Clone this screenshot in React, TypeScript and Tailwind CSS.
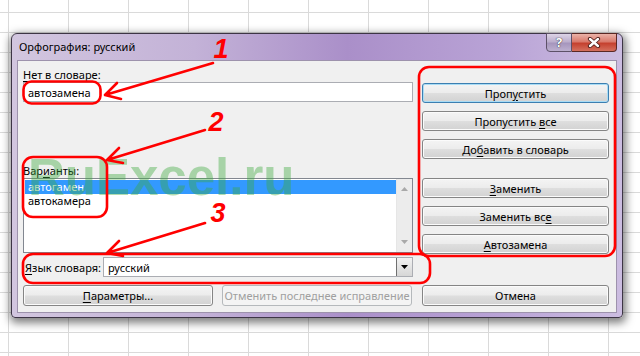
import type { ReactNode } from "react";
import clsx from "clsx";

const ui = "font-['Noto_Sans','Open_Sans',sans-serif]";

function U({ children }: { children: ReactNode }) {
  return <span className="underline decoration-1 underline-offset-[2px]">{children}</span>;
}

function Btn({
  children,
  className,
  primary,
  disabled,
}: {
  children: ReactNode;
  className?: string;
  primary?: boolean;
  disabled?: boolean;
}) {
  return (
    <div
      className={clsx(
        "flex items-center justify-center rounded-[3px] border text-[11px] leading-none",
        disabled
          ? "border-[#b5b9bc] bg-[#f4f4f4] text-[#a0a0a0]"
          : "bg-[linear-gradient(to_bottom,#f4f4f4_0%,#ececec_48%,#dedede_52%,#d2d2d2_100%)] text-black",
        !disabled && (primary ? "border-[#3c7fb1] shadow-[inset_0_0_0_1px_#a9dcf5]" : "border-[#858585] shadow-[inset_0_0_0_1px_#fbfbfb]"),
        className
      )}
    >
      <span>{children}</span>
    </div>
  );
}

export default function App() {
  return (
    <div
      className={clsx(
        "relative h-[356px] w-[640px] overflow-hidden bg-white pl-[11px] pt-[33px]",
        "bg-[linear-gradient(to_right,#dadada_1px,transparent_1px),linear-gradient(to_bottom,#dadada_1px,transparent_1px)] bg-size-[60px_20px] bg-position-[8px_12px]",
        ui
      )}
    >
      {/* dialog window */}
      <div className="flex h-[285px] w-[612px] flex-col rounded-t-[6px] rounded-b-[4px] border border-[#3d3545] bg-[linear-gradient(to_right,#d2c6df_0%,#c3b2d7_30%,#aa8fc9_55%,#b9a3d6_80%,#ccbde1_100%)] px-[5px] pb-[4px] shadow-[1px_3px_9px_2px_rgba(0,0,0,0.5)]">
        {/* title bar */}
        <div className="flex h-[26px] shrink-0 items-start justify-between">
          <span className="mt-[6px] pl-[2px] text-[11px] leading-[14px] text-black">Орфография: русский</span>
          <div className="-mt-px flex h-[19px]">
            <div className="flex w-[26px] items-center justify-center rounded-bl-[4px] border border-[#5d5168] bg-[linear-gradient(to_bottom,#ddd4e6_0%,#bcaecd_45%,#a696bd_55%,#bdb0d0_100%)] pb-px text-[13px] font-bold leading-none text-white [text-shadow:0_0_1px_#333,0_0_1px_#333]">
              ?
            </div>
            <div className="flex w-[45px] items-center justify-center rounded-br-[4px] border border-l-0 border-[#5a2824] bg-[linear-gradient(to_bottom,#eab2a8_0%,#d97a6c_45%,#c5412f_55%,#d4705e_100%)]">
              <svg width="14" height="11" viewBox="0 0 14 11">
                <path d="M3 2 L11 9 M11 2 L3 9" stroke="#4d1d19" strokeWidth="4.2" strokeLinecap="round" />
                <path d="M3 2 L11 9 M11 2 L3 9" stroke="#fff" strokeWidth="2.4" strokeLinecap="round" />
              </svg>
            </div>
          </div>
        </div>

        {/* client area */}
        <div className="flex h-[253px] w-[600px] flex-col border border-[#9d92ac] bg-[#f0f0f0] pl-[5px] pr-[7px] text-[11px] text-black">
          <div className="flex h-[216px] gap-[9px]">
            {/* left column */}
            <div className="flex w-[390px] flex-col">
              <div className="mt-[6px] leading-[15px]">
                <U>Н</U>ет в словаре:
              </div>
              <div className="flex h-[20px] items-center border border-[#abadb3] bg-white pl-[4px] leading-none">
                автозамена
              </div>

              <div className="mt-[61px] leading-[15px]">
                Вар<U>и</U>анты:
              </div>
              <div className="flex h-[75px] border border-[#828790] bg-white">
                <div className="flex flex-1 flex-col pl-px pt-px">
                  <div className="h-[14px] bg-[#3399ff] pl-[3px] leading-[14px] text-white">автогамен</div>
                  <div className="h-[14px] pl-[3px] leading-[14px]">автокамера</div>
                </div>
                <div className="flex w-[16px] flex-col items-center justify-between border-l border-[#e6e6e6] bg-[#ececec] py-[8px]">
                  <svg width="7" height="4" viewBox="0 0 7 4">
                    <path d="M0 4 L3.5 0 L7 4 Z" fill="#a9a9a9" />
                  </svg>
                  <svg width="7" height="4" viewBox="0 0 7 4">
                    <path d="M0 0 L7 0 L3.5 4 Z" fill="#a9a9a9" />
                  </svg>
                </div>
              </div>

              <div className="mt-[4px] flex h-[20px] items-center">
                <div className="w-[80px] pl-[2px] leading-none">
                  <U>Я</U>зык словаря:
                </div>
                <div className="flex h-[20px] flex-1 items-center justify-between border border-[#abadb3] bg-white pl-[4px] leading-none">
                  <span>русский</span>
                  <div className="flex h-full w-[16px] items-center justify-center border-l border-[#707070] bg-[linear-gradient(to_bottom,#f2f2f2,#d6d6d6)]">
                    <svg width="7" height="4" viewBox="0 0 7 4">
                      <path d="M0 0 L7 0 L3.5 4 Z" fill="#000" />
                    </svg>
                  </div>
                </div>
              </div>
            </div>

            {/* right column */}
            <div className="flex w-[187px] flex-col">
              <Btn primary className="mt-[22px] h-[20px]">
                Проп<U>у</U>стить
              </Btn>
              <Btn className="mt-[8px] h-[20px]">
                Пропустить <U>в</U>се
              </Btn>
              <Btn className="mt-[8px] h-[20px]">
                До<U>б</U>авить в словарь
              </Btn>
              <Btn className="mt-[19px] h-[20px]">
                <U>З</U>аменить
              </Btn>
              <Btn className="mt-[8px] h-[20px]">
                Заменить вс<U>е</U>
              </Btn>
              <Btn className="mt-[8px] h-[20px]">
                <U>А</U>втозамена
              </Btn>
            </div>
          </div>

          {/* bottom buttons */}
          <div className="mt-[8px] flex h-[21px]">
            <Btn className="w-[190px]">
              <U>П</U>араметры...
            </Btn>
            <Btn disabled className="ml-[9px] w-[190px]">
              Отменить последнее исправление
            </Btn>
            <Btn className="ml-[10px] w-[187px]">Отмена</Btn>
          </div>
        </div>
      </div>

      {/* site watermark */}
      <div className="pointer-events-none absolute left-[28px] top-[152px] font-['Liberation_Sans',Arial,sans-serif] text-[51px] font-bold leading-none text-[#3caa3c] opacity-40">
        RuExcel.ru
      </div>

      {/* red annotations */}
      <svg className="pointer-events-none absolute left-0 top-0" width="640" height="356" viewBox="0 0 640 356">
        <g fill="none" stroke="#ff0000" strokeWidth="2.6" strokeLinecap="round" strokeLinejoin="round">
          <rect x="23.5" y="81.5" width="77" height="22" rx="8" />
          <rect x="23" y="157" width="84" height="60" rx="10" />
          <rect x="23" y="254" width="407" height="29" rx="10" />
          <rect x="419" y="67" width="196" height="189" rx="10" />
          <path d="M213 63 L105 95 M117 83 L105 95 L121 99" />
          <path d="M205 130 L107 160 M119 148 L107 160 L123 163" />
          <path d="M205 223 L107 253 M119 241 L107 253 L123 256" />
        </g>
        <g fill="#ff0000" fontFamily="'Liberation Sans', Arial, sans-serif" fontWeight="bold" fontStyle="italic" fontSize="27" textAnchor="middle">
          <text x="221" y="58">1</text>
          <text x="216" y="131">2</text>
          <text x="218" y="222">3</text>
        </g>
      </svg>
    </div>
  );
}
